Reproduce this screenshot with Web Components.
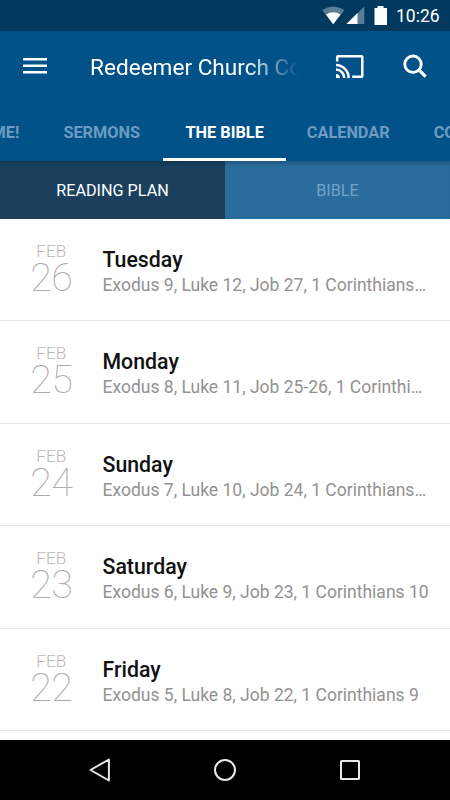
<!DOCTYPE html>
<html lang="en">
<head>
<meta charset="utf-8">
<title>Redeemer Church</title>
<style>
  body {
    margin: 0;
    font-family: Roboto, "Liberation Sans", sans-serif;
    background: #fff;
  }
</style>
</head>
<body>
<church-app></church-app>

<script>
// Attach an open shadow root filled from a template
function render(host, html) {
  const template = document.createElement('template');
  template.innerHTML = html;
  host.attachShadow({ mode: 'open' }).appendChild(template.content.cloneNode(true));
}

class StatusBar extends HTMLElement {
  constructor() {
    super();
    render(this, `
      <style>
        :host {
          display: flex;
          justify-content: flex-end;
          align-items: center;
          height: 31px;
          box-sizing: border-box;
          padding-right: 10px;
          background: #01395f;
          color: #fff;
          flex: none;
        }
        svg { display: block; flex: none; }
        .time { font-size: 17.500px; line-height: 32px; width: 44px; margin-left: 8px; white-space: nowrap; }
      </style>
      <svg width="66" height="31" viewBox="0 0 66 31">
        <path d="M0 10Q11 2.800 22.500 10L11.200 24.300Z" fill="#fff" opacity=".35"/>
        <path d="M4 14.600Q11.200 9.800 18.500 14.600L11.200 24.300Z" fill="#fff"/>
        <path d="M42.300 6.500V24H24.500Z" fill="#fff" opacity=".35"/>
        <path d="M35.500 13V24H24.500Z" fill="#fff"/>
        <path d="M52.500 8H55.500V6H61.500V8H65V25H52.500Z" fill="#fff"/>
      </svg>
      <span class="time"><slot></slot></span>
    `);
  }
}

class AppToolbar extends HTMLElement {
  constructor() {
    super();
    render(this, `
      <style>
        :host {
          display: flex;
          align-items: center;
          height: 70px;
          box-sizing: border-box;
          padding: 0 21px 0 22px;
          color: #fff;
          flex: none;
        }
        svg { display: block; flex: none; }
        .title {
          width: 210px;
          margin-left: 42px;
          margin-right: 35px;
          padding-top: 4px;
          overflow: hidden;
          white-space: nowrap;
          font-size: 22.600px;
          line-height: 30px;
          -webkit-mask-image: linear-gradient(to right, #000 155px, transparent 209px);
          mask-image: linear-gradient(to right, #000 155px, transparent 209px);
        }
        .search { margin-left: 37px; }
      </style>
      <svg width="26" height="70" viewBox="0 0 26 70">
        <path d="M1 28.200H25M1 34.800H25M1 41.300H25" stroke="#fff" stroke-width="2.400"/>
      </svg>
      <div class="title"><slot></slot></div>
      <svg width="30" height="70" viewBox="0 0 30 70" fill="none" stroke="#fff" stroke-width="2.500">
        <path d="M2.200 30.500V26Q2.200 25.200 3 25.200H26.500Q27.300 25.200 27.300 26V45Q27.300 45.800 26.500 45.800H17.200"/>
        <path d="M1 34A13 13 0 0 1 13.600 47M1 38.500A8.500 8.500 0 0 1 9.300 47"/>
        <path d="M1 43A4.200 4.200 0 0 1 5 47H1Z" fill="#fff" stroke="none"/>
      </svg>
      <svg class="search" width="26" height="70" viewBox="0 0 26 70" fill="none" stroke="#fff">
        <circle cx="11" cy="33.200" r="8.200" stroke-width="2.900"/>
        <path d="M16.600 38.600L23.600 45.600" stroke-width="3.200"/>
      </svg>
    `);
  }
}

class SectionTab extends HTMLElement {
  constructor() {
    super();
    render(this, `
      <style>
        :host {
          display: block;
          flex: none;
          box-sizing: border-box;
          height: 60px;
          padding: 0 23px 0 21px;
          font-size: 16.300px;
          font-weight: 700;
          line-height: 63px;
          text-align: center;
          white-space: nowrap;
          color: #6d9bc1;
        }
        :host([active]) {
          padding: 0 22px 0 22.500px;
          color: #fff;
          border-bottom: 3px solid #fff;
        }
      </style>
      <slot></slot>
    `);
  }
}

class TabStrip extends HTMLElement {
  constructor() {
    super();
    render(this, `
      <style>
        :host {
          display: flex;
          height: 60px;
          overflow: hidden;
          flex: none;
        }
        /* The strip is scrolled so the active tab sits in the middle */
        .track { display: flex; flex: none; margin-left: -83px; }
      </style>
      <div class="track"><slot></slot></div>
    `);
  }
}

class PlanSwitch extends HTMLElement {
  constructor() {
    super();
    render(this, `
      <style>
        :host { display: flex; height: 57.500px; flex: none; }
        div {
          flex: 1;
          font-size: 16.200px;
          line-height: 59.500px;
          text-align: center;
          background: #2a6c9d;
          color: #72a4cb;
          box-shadow: inset 0 5px 5px -4px rgba(0, 30, 50, .45);
        }
        .on { background: #1b405d; color: #fff; }
      </style>
      <div class="on"><slot name="first"></slot></div>
      <div><slot name="second"></slot></div>
    `);
  }
}

class ReadingRow extends HTMLElement {
  constructor() {
    super();
    render(this, `
      <style>
        :host {
          display: flex;
          align-items: flex-start;
          box-sizing: border-box;
          height: 102.500px;
          border-bottom: 1px solid #e6e6e6;
          flex: none;
        }
        .date {
          width: 102.500px;
          box-sizing: border-box;
          padding-top: 23px;
          text-align: center;
          color: #b8b8b8;
          flex: none;
        }
        .month { font-size: 17.200px; line-height: 18px; font-weight: 300; }
        .num { font-size: 39.500px; line-height: 35px; font-weight: 100; color: #acacac; letter-spacing: -.5px; }
        .text { flex: 1; min-width: 0; padding: 27px 20px 0 0; }
        .day { font-size: 21.300px; line-height: 27px; font-weight: 500; color: #111; }
        .passage {
          font-size: 17.500px;
          line-height: 24px;
          color: #929292;
          overflow: hidden;
          text-overflow: ellipsis;
          white-space: nowrap;
        }
      </style>
      <div class="date">
        <div class="month">FEB</div>
        <div class="num"></div>
      </div>
      <div class="text">
        <div class="day"></div>
        <div class="passage"><slot></slot></div>
      </div>
    `);
    this.shadowRoot.querySelector('.num').textContent = this.getAttribute('date');
    this.shadowRoot.querySelector('.day').textContent = this.getAttribute('day');
  }
}

class NavBar extends HTMLElement {
  constructor() {
    super();
    render(this, `
      <style>
        :host {
          display: flex;
          justify-content: center;
          align-items: center;
          gap: 101px;
          height: 60px;
          background: #000;
          flex: none;
        }
        svg { display: block; }
      </style>
      <svg width="24" height="24" viewBox="0 0 24 24"><path d="M2.500 12L20.900 1.500V22.500Z" fill="none" stroke="#e8e8e8" stroke-width="2" stroke-linejoin="round"/></svg>
      <svg width="24" height="24" viewBox="0 0 24 24"><circle cx="12" cy="12" r="10" fill="none" stroke="#e8e8e8" stroke-width="2"/></svg>
      <svg width="24" height="24" viewBox="0 0 24 24"><rect x="3" y="3" width="18" height="18" rx=".5" fill="none" stroke="#e8e8e8" stroke-width="2"/></svg>
    `);
  }
}

class ChurchApp extends HTMLElement {
  constructor() {
    super();
    render(this, `
      <style>
        :host {
          display: flex;
          flex-direction: column;
          width: 450px;
          height: 800px;
          overflow: hidden;
        }
        header { background: #02528a; flex: none; }
        main { flex: 1; min-height: 0; overflow: hidden; }
      </style>
      <status-bar>10:26</status-bar>
      <header>
        <app-toolbar>Redeemer Church Co</app-toolbar>
        <tab-strip>
          <section-tab>WELCOME!</section-tab>
          <section-tab>SERMONS</section-tab>
          <section-tab active>THE BIBLE</section-tab>
          <section-tab>CALENDAR</section-tab>
          <section-tab>CONNECT</section-tab>
        </tab-strip>
      </header>
      <plan-switch>
        <span slot="first">READING PLAN</span>
        <span slot="second">BIBLE</span>
      </plan-switch>
      <main>
        <reading-row date="26" day="Tuesday">Exodus 9, Luke 12, Job 27, 1 Corinthians 13</reading-row>
        <reading-row date="25" day="Monday">Exodus 8, Luke 11, Job 25-26, 1 Corinthians 12</reading-row>
        <reading-row date="24" day="Sunday">Exodus 7, Luke 10, Job 24, 1 Corinthians 11</reading-row>
        <reading-row date="23" day="Saturday">Exodus 6, Luke 9, Job 23, 1 Corinthians 10</reading-row>
        <reading-row date="22" day="Friday">Exodus 5, Luke 8, Job 22, 1 Corinthians 9</reading-row>
      </main>
      <nav-bar></nav-bar>
    `);
  }
}

// Children first, so the app renders with everything defined
customElements.define('status-bar', StatusBar);
customElements.define('app-toolbar', AppToolbar);
customElements.define('section-tab', SectionTab);
customElements.define('tab-strip', TabStrip);
customElements.define('plan-switch', PlanSwitch);
customElements.define('reading-row', ReadingRow);
customElements.define('nav-bar', NavBar);
customElements.define('church-app', ChurchApp);
</script>
</body>
</html>
